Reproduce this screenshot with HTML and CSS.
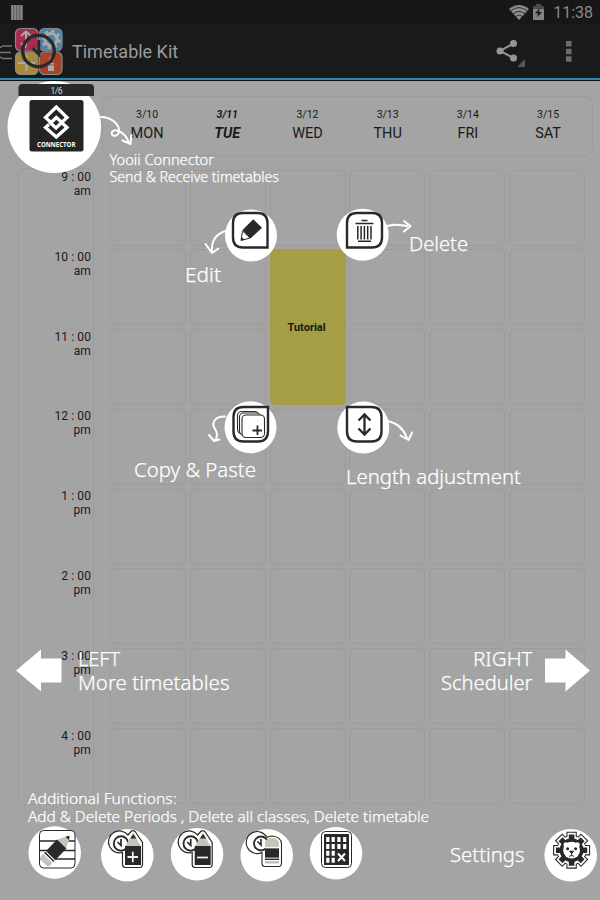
FILE: index.html
```html
<!DOCTYPE html>
<html lang="en">
<head>
<meta charset="utf-8">
<title>Timetable Kit</title>
<link rel="stylesheet" href="styles.css">
</head>
<body>
<div class="screen">
  <div class="status">
    <svg class="bars" width="12" height="15"><path d="M1.400 0v15M4.400 0v15M7.400 0v15M10.400 0v15" stroke="#858585" stroke-width="2.600"/></svg>
    <div class="status-right">
      <svg width="20" height="15" viewBox="0 0 20 15"><path d="M0 4Q10-4 20 4L10 15Z" fill="#8c8c8c"/><path d="M1.500 6Q10-.8 18.500 6M4 8.800Q10 4 16 8.800M6.300 11.500Q10 8.500 13.700 11.500" fill="none" stroke="#1b1b1b" stroke-width=".8"/></svg>
      <svg class="battery" width="11" height="16" viewBox="0 0 11 16"><path d="M3 0h5v2h3v4H0V2h3Z" fill="#4b4b4b"/><path d="M0 5h11v11H0Z" fill="#838383"/><path d="M6.800 4 2 9.600h3L4.200 13.500 9 8H6Z" fill="#1b1b1b"/></svg>
      <span class="clock">11:38</span>
    </div>
  </div>
  <div class="actionbar">
    <svg class="logo" width="64" height="54" viewBox="0 24 64 54">
      <path d="M2 46h10M0 47h2M0 52.500h11M2 58.500h10M0 57.500h2" stroke="#777" stroke-width="1.700"/>
      <g stroke="#8a8a8a" stroke-width="1.200"><rect x="15.500" y="28.500" width="22.500" height="22.500" rx="5" fill="#a82c50"/><rect x="39.500" y="28.500" width="22.500" height="22.500" rx="5" fill="#4b83a9"/><rect x="15.500" y="52" width="22.500" height="22.500" rx="5" fill="#a88a3d"/><rect x="39.500" y="52" width="22.500" height="22.500" rx="5" fill="#a64226"/></g>
      <path d="M21 36l5-4.500 5 4.500M26 32v14M21 43l5 5M18 63h17M26.500 55v16" fill="none" stroke="#aaa" stroke-width="2"/>
      <circle cx="51" cy="39.500" r="6" fill="none" stroke="#aaa" stroke-width="3"/><circle cx="51" cy="39.500" r="8.500" fill="none" stroke="#aaa" stroke-width="2.500" stroke-dasharray="3.300 3.370"/>
      <path d="M48 63h6v8h-6zM48 61l3-5 3 5" fill="#aaa"/><path d="M48 65h6" stroke="#a64226"/>
      <circle cx="38.500" cy="51" r="15.800" fill="none" stroke="#292929" stroke-width="3.400"/>
      <path d="M32.500 48l6.300 6.200V40" fill="none" stroke="#292929" stroke-width="3"/>
    </svg>
    <span class="title">Timetable Kit</span>
    <svg class="actions" width="90" height="36" viewBox="490 34 90 36">
      <path d="M513.500 43.500 500 51l13.500 7" fill="none" stroke="#969696" stroke-width="2"/><g fill="#969696"><circle cx="513.500" cy="43.500" r="3.500"/><circle cx="500" cy="51" r="3.500"/><circle cx="513.500" cy="58" r="3.500"/></g>
      <path d="M525 59v8h-8Z" fill="#555"/><path d="M566 41h5.500v5.500H566zM566 48.700h5.500v5.500H566zM566 56.300h5.500v5.500H566z" fill="#6c6c6c"/>
    </svg>
  </div>
  <div class="week">
    <div class="day"><small>3/10</small><span>MON</span></div>
    <div class="day today"><small>3/11</small><span>TUE</span></div>
    <div class="day"><small>3/12</small><span>WED</span></div>
    <div class="day"><small>3/13</small><span>THU</span></div>
    <div class="day"><small>3/14</small><span>FRI</span></div>
    <div class="day"><small>3/15</small><span>SAT</span></div>
  </div>
  <div class="board">
    <div class="times">
      <div>9 : 00<br>am</div><div>10 : 00<br>am</div><div>11 : 00<br>am</div><div>12 : 00<br>pm</div><div>1 : 00<br>pm</div><div>2 : 00<br>pm</div><div>3 : 00<br>pm</div><div>4 : 00<br>pm</div>
    </div>
    <div class="grid">
      <i></i><i></i><i></i><i></i><i></i><i></i>
      <i></i><i></i><div class="lesson">Tutorial</div><i></i><i></i><i></i>
      <i></i><i></i><i></i><i></i><i></i>
      <i></i><i></i><i></i><i></i><i></i><i></i>
      <i></i><i></i><i></i><i></i><i></i><i></i>
      <i></i><i></i><i></i><i></i><i></i><i></i>
      <i></i><i></i><i></i><i></i><i></i><i></i>
      <i></i><i></i><i></i><i></i><i></i><i></i>
    </div>
  </div>

  <svg class="coach" width="600" height="900" viewBox="0 0 600 900">
    <g fill="#fff">
      <ellipse cx="54.300" cy="127" rx="46.800" ry="46"/>
      <circle cx="251" cy="235.500" r="26"/><circle cx="362.700" cy="234.700" r="26"/><circle cx="250.500" cy="427.300" r="26"/><circle cx="363.300" cy="427.500" r="26"/>
      <circle cx="54.700" cy="852.500" r="26.300"/><circle cx="127.300" cy="855.300" r="26.300"/><circle cx="197" cy="854.300" r="26.300"/><circle cx="266.700" cy="855.300" r="26.300"/><circle cx="336" cy="853.300" r="26.300"/><circle cx="570.700" cy="855.300" r="26.300"/>
      <path d="M16 670.500 41 649.500V658.500H61.500V682.500H41V691.500Z"/><path d="M590 670.500 565.500 649.500V658.500H545V682.500H565.500V691.500Z"/>
    </g>

    <!-- connector badge -->
    <path d="M18.500 96V88q0-4 4-4H90q4 0 4 4v8Z" fill="#292929"/>
    <text class="page" x="50.500" y="93.500" textLength="12">1/6</text>
    <rect x="29.500" y="100" width="54" height="51.500" rx="2.500" fill="#242424"/>
    <path d="M62 122.500 56.300 117.500 50.500 123 56 128 67 117.500 56.300 107 45.500 117.500 52 123.500M60.500 121.500 67 127.500 56.300 137 45.500 127.500 49 124.500" fill="none" stroke="#fff" stroke-width="3.300"/>
    <text class="brand" x="37" y="147" textLength="38.500" lengthAdjust="spacingAndGlyphs">CONNECTOR</text>

    <!-- pointer arrows -->
    <g class="arrows">
      <path d="M101 117C111 117 120 124 119 132C117 138 110 136 112 132C115 127 126 133 129 143M122.500 140.500l8 3.500 1-9"/>
      <path d="M225.500 231C216 234 211 241 212 252M205.500 244l6.500 9 6.500-4.500"/>
      <path d="M384 228C391 223 399 225 407 226M404 221l6.500 5-6.500 5.500"/>
      <path d="M225 416.500C216 416 211 422 214.500 428C218 433 218 437 214.500 441M209 435l5 6 5.500-1.500"/>
      <path d="M387.500 421C398 423 404 430 407 438M400.500 435.500l8 4.500 3.500-7.500"/>
    </g>

    <!-- corner buttons -->
    <g class="frame">
      <path d="M243 213h14.500q10 0 10 10v24.500h-24.500q-10 0-10-10v-14.500q0-10 10-10Z"/>
      <path d="M347 247.500V223q0-10 10-10h15q10 0 10 10v14.500q0 10-10 10Z"/>
      <path d="M268 407v24q0 10.500-10 10.500h-14.500q-10 0-10-10V417q0-10 10-10Z"/>
      <path d="M347 407h24.500q10 0 10 10v14.500q0 10-10 10H357q-10 0-10-10Z"/>
    </g>
    <path d="M253.300 219.300 262 227.700 250.500 238.500 242.500 230Z" fill="#292929"/><path d="M242.500 231 241 240.500 250 238Z" fill="#fff" stroke="#292929" stroke-width="1"/><path d="M241 240.500l.6-3.500 2.800 2.500Z" fill="#292929"/>
    <g stroke="#292929" fill="none"><path d="M355.500 223.500h18M361.500 220.500h6M358 241.300h13" stroke-width="1.600"/><path d="M357.800 226v13.500M361.100 226v13.500M364.400 226v13.500M367.700 226v13.500M371 226v13.500" stroke-width="1.500"/></g>
    <g fill="#fff" stroke="#292929" stroke-width="1.100"><rect x="237.500" y="411.500" width="21" height="22" rx="4"/><rect x="239.500" y="413" width="21" height="22" rx="4"/><rect x="242" y="415" width="22.500" height="22.500" rx="4"/><path d="M257.500 425.500v9.500M252.500 430.500h9.500" stroke-width="1.800"/></g>
    <path d="M364.500 415v19M358.500 420.500l6-6 6 6M358.500 428.500l6 6 6-6" fill="none" stroke="#292929" stroke-width="2.300"/>

    <!-- erase period -->
    <rect x="39.500" y="830.500" width="35.500" height="37.500" rx="4" fill="#fff" stroke="#292929"/><path d="M39.500 841h35.500M39.500 850.500h35.500M39.500 859h35.500" stroke="#292929" stroke-width="1.300"/>
    <g transform="translate(56.500 849.500) rotate(44)"><path d="M-6.500-7-1.500-17.500H1.500L6.500-7Z" fill="#c5c4b8"/><path d="M-2.300-15.500 0-19 2.300-15.500Z" fill="#292929"/><path d="M-6.500-7.500H6.500V9H-6.500Z" fill="#292929"/><path d="M-6.500 8.500H6.500V14H-6.500Z" fill="#fff"/><path d="M-6.500 10.300H6.500" stroke="#292929" stroke-width="1.500"/><path d="M-6.500 12.500H6.500v3.500q0 2.500-2.500 2.500h-8q-2.500 0-2.500-2.500Z" fill="#c5c4b8"/></g>

    <!-- clock and pencil -->
    <defs>
      <g id="clock-pencil">
        <path d="M122.500 852.500A11 11 0 1 1 128 835L131 831.500Q133.300 829.500 135.500 832L142.500 842.500V864q0 3.500-3 3.500H125.500q-3 0-3-3Z" fill="#fff" stroke="#292929" stroke-width="1.200"/>
        <circle cx="121" cy="843.500" r="7.200" fill="#fff" stroke="#292929" stroke-width="1.900"/><path d="M117.500 842l3.500 3.500v-6.500" fill="none" stroke="#292929" stroke-width="1.700"/>
        <path d="M125 846.500 133.300 832.500 141 846.500Z" fill="#c5c4b8"/><path d="M130.300 838.500 133.300 834 136.300 838.500Z" fill="#292929"/><path d="M125 846h16v19h-16Z" fill="#292929"/>
      </g>
    </defs>
    <use href="#clock-pencil"/><path d="M127.500 857h10.500M132.800 851.700v10.500" stroke="#eee" stroke-width="1.800"/>
    <use href="#clock-pencil" x="69.700"/><path d="M197 857.500h11" stroke="#eee" stroke-width="1.800"/>

    <!-- clock and eraser -->
    <path d="M262 852.500A11 11 0 1 1 267 837.500Q269 836 272 836Q281.500 837 281.500 844V863q0 3.500-3 3.500H265q-3 0-3-3Z" fill="#fff" stroke="#292929" stroke-width="1.100"/>
    <circle cx="261" cy="843.500" r="7" fill="#fff" stroke="#292929" stroke-width="1.800"/><path d="M257.500 841.500l3.500 3.500v-6" fill="none" stroke="#292929" stroke-width="1.600"/>
    <path d="M265 863.500V843q1-5 7-5t7 5v20.500Z" fill="#c5c4b8"/><path d="M265 848.500h14v9h-14Z" fill="#292929"/><path d="M265 847.300h14M265 860.500h14" stroke="#fff"/><path d="M265 859.400h14" stroke="#292929" stroke-width="1.200"/>

    <!-- delete timetable -->
    <rect x="321.500" y="831.500" width="30" height="36" rx="4" fill="#fff" stroke="#292929"/><rect x="324" y="834" width="25" height="31" rx=".5" fill="#292929"/>
    <path d="M327.800 837v27M333.200 837v27M338.900 837v12M344.700 837v12" stroke="#fff" stroke-width="3.200" stroke-dasharray="5 1.900"/><path d="M338 853.500l7 7.500M345 853.500l-7 7.500" stroke="#fff" stroke-width="2"/>

    <!-- settings -->
    <defs><path id="spokes" d="M0-1V1M-1 0H1M-.707-.707.707.707M-.707.707.707-.707" vector-effect="non-scaling-stroke"/></defs>
    <g transform="translate(571.600 850.200)">
      <g stroke="#292929" fill="#292929"><use href="#spokes" transform="scale(18.500)" stroke-width="10.400"/><circle r="14.500"/></g>
      <g stroke="#fff" fill="#fff"><use href="#spokes" transform="scale(17.400)" stroke-width="8.200"/><circle r="13.700"/></g>
      <g stroke="#292929" fill="#292929"><use href="#spokes" transform="scale(15.600)" stroke-width="5.600"/><circle r="11.500"/></g>
      <circle r="8.400" fill="#fff"/><circle cx="-5.600" cy="-5.500" r="2.500" fill="#fff"/><circle cx="5.600" cy="-5.500" r="2.500" fill="#fff"/>
      <circle cx="-4" cy="-1.500" r="1.500" fill="#292929"/><circle cx="4" cy="-1.500" r="1.500" fill="#292929"/><path d="M-2 1h4L0 3.300Z" fill="#292929" stroke="#292929"/><path d="M0 3v2.500M-2.500 6.200 0 5.200 2.500 6.200" fill="none" stroke="#292929"/>
    </g>

    <g class="note small">
      <text x="109.500" y="165" textLength="104.500" lengthAdjust="spacingAndGlyphs">Yooii Connector</text>
      <text x="109.500" y="181.500" textLength="169.500" lengthAdjust="spacingAndGlyphs">Send &amp; Receive timetables</text>
    </g>
    <g class="note mid">
      <text x="28" y="803.500" textLength="148.500" lengthAdjust="spacingAndGlyphs">Additional Functions:</text>
      <text x="28" y="822" textLength="401" lengthAdjust="spacingAndGlyphs">Add &amp; Delete Periods , Delete all classes, Delete timetable</text>
    </g>
    <g class="note large">
      <text x="185" y="282" textLength="36" lengthAdjust="spacingAndGlyphs">Edit</text>
      <text x="409" y="251" textLength="59" lengthAdjust="spacingAndGlyphs">Delete</text>
      <text x="134" y="477" textLength="122" lengthAdjust="spacingAndGlyphs">Copy &amp; Paste</text>
      <text x="346" y="484" textLength="175" lengthAdjust="spacingAndGlyphs">Length adjustment</text>
      <text x="78" y="665.500" textLength="42" lengthAdjust="spacingAndGlyphs">LEFT</text>
      <text x="78" y="689.500" textLength="151.500" lengthAdjust="spacingAndGlyphs">More timetables</text>
      <text x="473" y="665.500" textLength="59.500" lengthAdjust="spacingAndGlyphs">RIGHT</text>
      <text x="441" y="689.500" textLength="91.500" lengthAdjust="spacingAndGlyphs">Scheduler</text>
      <text x="450" y="862" textLength="74.500" lengthAdjust="spacingAndGlyphs">Settings</text>
    </g>
  </svg>
</div>
</body>
</html>
```

FILE: styles.css
```css
* { box-sizing: border-box; }
body { margin: 0; font-family: Roboto, sans-serif; color: #191919; }
svg { display: block; flex: none; }
.screen { position: relative; width: 600px; height: 900px; overflow: hidden; background: #a4a4a4; }
.status { height: 24px; background: #171717; display: flex; align-items: center; justify-content: space-between; padding: 0 7px 0 11px; }
.status-right { display: flex; align-items: center; }
.battery { margin: 0 9px 0 4px; }
.clock { font-size: 16px; line-height: 24px; color: #898989; width: 40px; text-align: right; padding-top: 1px; }
.actionbar { height: 57px; background: #1a1a1a; border-bottom: 1px solid #101010; box-shadow: inset 0 -2px #2b89aa; display: flex; align-items: flex-start; }
.title { font-size: 18px; line-height: 54px; color: #9b9b9b; margin-left: 8px; flex: 1; padding-top: 1px; }
.actions { margin: 10px 20px 0 0; }
.week { margin: 15px 7px 0 102px; height: 60px; border: 1px solid #9b9b97; border-radius: 8px; display: grid; grid-template-columns: repeat(6, 80.200px); padding: 9px 0 0 4px; }
.day { display: flex; flex-direction: column; align-items: center; font-size: 14.500px; line-height: 20px; }
.day small { font-size: 10.500px; line-height: 18px; }
.today { font-weight: 700; font-style: italic; }
.board { display: flex; margin: 12px 0 0 18px; gap: 16px; }
.times { width: 76px; height: 637px; border: 1px solid #9b9b97; border-radius: 7px; padding: 1px 2px 0 0; text-align: right; font-size: 12px; line-height: 14px; letter-spacing: .1px; }
.times div { height: 79.800px; }
.grid { display: grid; grid-template-columns: repeat(6, 76px); grid-template-rows: repeat(8, 76px); gap: 3.800px; padding-top: 1.500px; }
.grid i { border: 1px solid #9b9b97; border-radius: 6px; }
.lesson { grid-column: 3; grid-row: 2 / span 2; background: #a49e45; border-radius: 5px; display: flex; align-items: center; justify-content: center; font-size: 11px; font-weight: 700; padding-right: 2px; }
.coach { position: absolute; left: 0; top: 0; }
.arrows { fill: none; stroke: #fff; stroke-width: 2; stroke-linecap: round; stroke-linejoin: round; }
.frame { fill: #fff; stroke: #292929; stroke-width: 2.400; }
.note { fill: #fff; stroke: #fff; stroke-width: .25px; font-family: "Noto Sans", "Open Sans", sans-serif; font-weight: 300; }
.small { font-size: 14px; }
.mid { font-size: 15px; }
.large { font-size: 20px; }
.page { fill: #ddd; font: 8.500px Roboto, sans-serif; }
.brand { fill: #fff; font: 700 6.500px "Open Sans", sans-serif; }
```
